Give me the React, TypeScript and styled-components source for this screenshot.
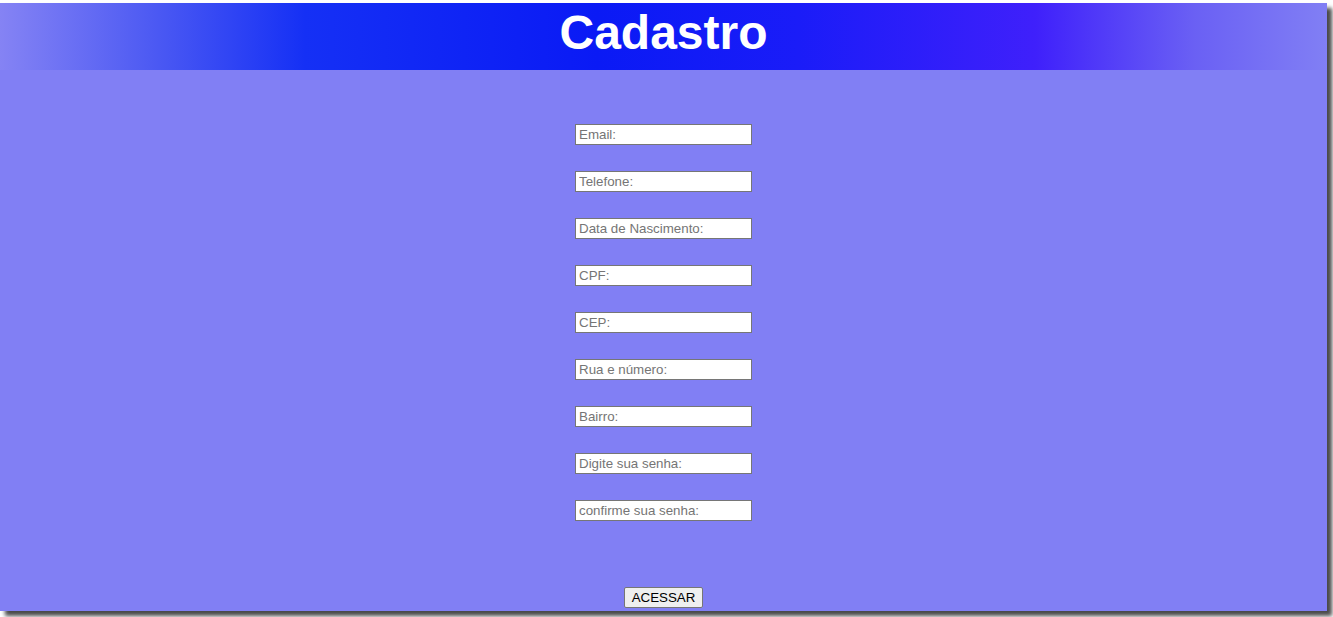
import React from "react";
import styled, { createGlobalStyle } from "styled-components";

const Global = createGlobalStyle`
  html, body { margin: 0; padding: 0; background: #ffffff; }
  body {
    font-family: "Liberation Sans", Arial, sans-serif;
    overflow: hidden;
    min-height: 617px;
  }
`;

const Page = styled.div`
  margin-top: 3px;
  width: 1327px;
  height: 608px;
  background: #817ff4;
  box-shadow: 5px 5px 4px #4a4a4a;
  display: flex;
  flex-direction: column;
  align-items: center;
`;

const Header = styled.header`
  align-self: stretch;
  height: 67px;
  background: linear-gradient(
    to right,
    #8583f4 0%,
    #4a58f3 12%,
    #1530f5 23%,
    #0a1af5 45%,
    #1a1cf8 60%,
    #3f20fb 78%,
    #6a60f4 90%,
    #817ff4 100%
  );
  display: flex;
  justify-content: center;
  align-items: center;
`;

const Title = styled.h1`
  margin: 0;
  color: #ffffff;
  font-family: "Liberation Sans", Arial, sans-serif;
  font-weight: bold;
  font-size: 48px;
  line-height: 1;
  transform: translateY(-4px);
`;

const Form = styled.form`
  display: flex;
  flex-direction: column;
  align-items: center;
  gap: 26px;
  padding-top: 54px;
`;

const Field = styled.input`
  box-sizing: border-box;
  width: 177px;
  height: 21px;
  border: 1px solid #767676;
  padding: 0 3px;
  margin: 0;
  background: #ffffff;
  font-family: "Liberation Sans", Arial, sans-serif;
  font-size: 13.33px;
  &::placeholder { color: #757575; }
`;

const Submit = styled.button`
  box-sizing: border-box;
  margin-top: 40px;
  width: 79px;
  height: 21px;
  padding: 0;
  border: 1px solid #767676;
  border-radius: 2px;
  background: #efefef;
  color: #000;
  font-family: "Liberation Sans", Arial, sans-serif;
  font-size: 13.33px;
`;

const fields = [
  "Email:",
  "Telefone:",
  "Data de Nascimento:",
  "CPF:",
  "CEP:",
  "Rua e número:",
  "Bairro:",
  "Digite sua senha:",
  "confirme sua senha:",
];

export default function App() {
  return (
    <>
      <Global />
      <Page>
        <Header>
          <Title>Cadastro</Title>
        </Header>
        <Form onSubmit={(e) => e.preventDefault()}>
          {fields.map((f) => (
            <Field key={f} placeholder={f} />
          ))}
          <Submit type="submit">ACESSAR</Submit>
        </Form>
      </Page>
    </>
  );
}
